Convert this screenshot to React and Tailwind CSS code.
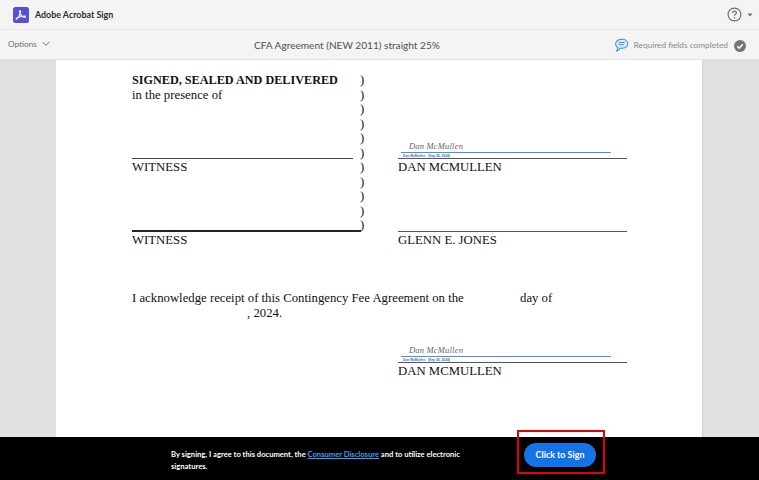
import React from "react";

const ui = "font-['Lato',sans-serif]";

function Paren() {
  return <div className="h-[14.5px] leading-[14.5px]">)</div>;
}

function Sig() {
  return (
    <div className="h-[12px] ml-[3px] w-[210px] border-b border-[#4a90e2] relative">
      <span className="absolute left-[8px] bottom-[1px] font-['Liberation_Serif',serif] italic text-[8.5px] leading-[10px] tracking-[0.2px] whitespace-nowrap text-[#666]">Dan McMullen</span>
      <span className="absolute left-[2px] top-[13px] font-['Liberation_Sans',sans-serif] text-[3.3px] leading-[5px] whitespace-nowrap text-[#2f6fd0] font-bold">Dan McMullen &nbsp; (Sep 26, 2024)</span>
    </div>
  );
}

export default function App() {
  return (
    <div className={`w-[759px] h-[480px] overflow-hidden flex flex-col bg-[#e1e1e1] ${ui}`}>
      <header className="h-[30px] shrink-0 bg-[#f4f4f4] border-b border-[#e8e8e8] flex items-center pl-[13px] pr-[6px]">
        <svg width="16" height="16" viewBox="0 0 16 16" className="mr-[6px]">
          <rect width="16" height="16" rx="2.5" fill="#5a4fd6" />
          <path d="M3.4 12.2c1.6-1 3-3.4 3.9-6 .4-1.3.3-2.6-.2-2.7-.6 0-.6 1.500 0 3 .8 2 2.200 3.400 3.500 3.700 1 .2 2.100 0 2-.6-.1-.6-1.600-.7-3.300-.4-2.100.3-4 1-5.300 1.800-.9.6-1.100 1.100-.6 1.200z" fill="none" stroke="#fff" strokeWidth="1.1" />
        </svg>
        <span className="text-[8.9px] font-bold text-[#2c2c2c] whitespace-nowrap">Adobe Acrobat Sign</span>
        <div className="ml-auto flex items-center gap-[5px] text-[#6e6e6e]">
          <svg width="15" height="15" viewBox="0 0 14 14" fill="none">
            <circle cx="7" cy="7" r="6" stroke="#6e6e6e" strokeWidth="1.1" />
            <path d="M5.2 5.5c0-1 .8-1.600 1.800-1.600s1.800.6 1.800 1.500c0 1.300-1.800 1.400-1.800 2.800" stroke="#6e6e6e" strokeWidth="1.1" />
            <circle cx="7" cy="10.100" r=".75" fill="#6e6e6e" />
          </svg>
          <svg width="6" height="4" viewBox="0 0 6 4"><path d="M0.5 0.5h5L3 3.500z" fill="#6e6e6e" /></svg>
        </div>
      </header>

      <div className="h-[30px] shrink-0 bg-[#f4f4f4] border-b border-[#e2e2e2] flex items-center pl-[8px] pr-[13px] relative">
        <div className="flex items-center gap-[5px] w-[120px] text-[#6e6e6e] -mt-[1px]">
          <span className="text-[8.2px]">Options</span>
          <svg width="8" height="6" viewBox="0 0 8 6" fill="none"><path d="M0.7 1l3.300 3.400L7.300 1" stroke="#6e6e6e" strokeWidth="1" /></svg>
        </div>
        <div className="absolute left-[254px] mt-[2px] text-[10.1px] text-[#505050] whitespace-nowrap">CFA Agreement (NEW 2011) straight 25%</div>
        <div className="ml-auto mt-[2px] flex items-center text-[#8a8a8a]">
          <svg width="15" height="15" viewBox="0 0 15 15" fill="none" className="mr-[5px]">
            <path d="M7.8 1.200c3.300 0 6 1.900 6 4.600s-2.700 4.500-6 4.500c-.6 0-1.100 0-1.600-.1-.8 1.300-2 2.400-3.500 2.900.5-.9.9-1.900 1-3.300C2.400 8.900 1.600 7.500 1.600 5.800c0-2.700 2.900-4.600 6.200-4.600z" fill="#d9ecfb" stroke="#3b93dc" strokeWidth="1.1" />
            <path d="M4.800 4.500h6M4.800 6.700h5" stroke="#3b93dc" strokeWidth="1" />
          </svg>
          <span className="text-[8.3px] mr-[6px] whitespace-nowrap">Required fields completed</span>
          <svg width="12" height="12" viewBox="0 0 12 12" fill="none">
            <circle cx="6" cy="6" r="6" fill="#757575" />
            <path d="M3.200 6.200l2 2 3.600-4" stroke="#fff" strokeWidth="1.400" />
          </svg>
        </div>
      </div>

      <main className="flex-1 min-h-0 flex justify-center overflow-hidden">
        <div className="w-[647px] bg-white border-r border-[#d4d4d4] pl-[76px] pt-[13px] font-['Liberation_Serif',serif] text-[12.75px] text-[#111]">
          <div className="flex">
            <div className="w-[228px] shrink-0">
              <div className="h-[14.5px] leading-[14.5px] text-[12.2px] font-bold whitespace-nowrap">SIGNED, SEALED AND DELIVERED</div>
              <div className="h-[14.5px] leading-[14.5px]">in the presence of</div>
              <div className="h-[57px] w-[221px] border-b border-[#444]" />
              <div className="h-[14.5px] leading-[14.5px] mt-[1px]">WITNESS</div>
              <div className="h-[58px] border-b-2 border-[#222] w-[229px] -mt-[0.5px]" />
              <div className="h-[14.5px] leading-[14.5px] mt-[1px]">WITNESS</div>
            </div>
            <div className="w-[38px] shrink-0">
              {Array.from({ length: 11 }).map((_, i) => <Paren key={i} />)}
            </div>
            <div className="w-[229px] shrink-0 pt-[68px]">
              <div className="h-[18px] relative border-b border-[#555]">
                <Sig />
              </div>
              <div className="h-[14.5px] leading-[14.5px] mt-[1px]">DAN MCMULLEN</div>
              <div className="h-[57px] border-b border-[#555]" />
              <div className="h-[14.5px] leading-[14.5px] mt-[1px]">GLENN E. JONES</div>
            </div>
          </div>

          <div className="mt-[43px] w-[500px]">
            <div className="flex h-[15px] leading-[15px] whitespace-nowrap">
              <span className="w-[388px]">I acknowledge receipt of this Contingency Fee Agreement on the</span>
              <span>day of</span>
            </div>
            <div className="h-[15px] leading-[15px] pl-[115px]">, 2024.</div>
          </div>

          <div className="ml-[266px] mt-[24.5px] w-[229px]">
            <div className="h-[18px] border-b border-[#555] relative">
              <Sig />
            </div>
            <div className="h-[14.5px] leading-[14.5px] mt-[1px]">DAN MCMULLEN</div>
          </div>
        </div>
      </main>

      <footer className="h-[43px] shrink-0 bg-black flex items-center pl-[171px] relative">
        <p className="w-[310px] pr-[18px] mt-[3px] text-[7.6px] leading-[12.5px] text-white font-bold">
          By signing, I agree to this document, the <a className="text-[#3aa0f0] underline">Consumer Disclosure</a> and to utilize electronic signatures.
        </p>
        <button className="ml-[43px] -mt-[7px] w-[72px] h-[24px] rounded-full bg-[#1473e6] text-white text-[8.9px] font-bold">Click to Sign</button>
        <div className="absolute left-[517px] top-[-7px] w-[88px] h-[44px] border-2 border-[#e60000]" />
      </footer>
    </div>
  );
}
